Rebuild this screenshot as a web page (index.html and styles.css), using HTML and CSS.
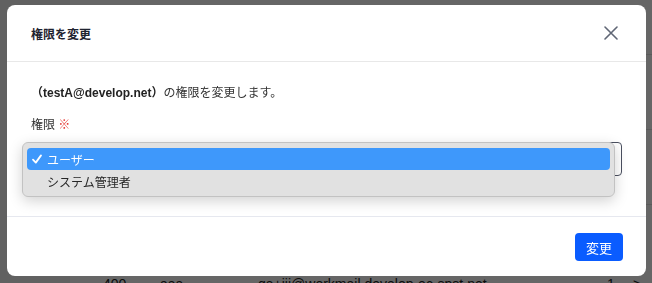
FILE: index.html
```html
<!DOCTYPE html>
<html lang="ja">
<head>
    <meta charset="UTF-8">
    <meta name="viewport" content="width=device-width, initial-scale=1.0">
    <title>権限を変更</title>
    <link rel="stylesheet" href="styles.css">
</head>
<body>
    <!-- Page behind the dialog -->
    <div class="page">
        <aside class="sidebar"></aside>
        <main class="main">
            <div class="topbar"></div>
            <div class="row"></div>
            <div class="row"></div>
            <div class="data-row">
                <span>400</span>
                <span>aaa</span>
                <span>qa+jjj@workmail.develop-ec-spst.net</span>
                <span>1</span>
                <span>&gt;</span>
            </div>
        </main>
    </div>

    <!-- Dialog -->
    <div class="overlay">
        <div class="modal">
            <div class="modal-header">
                <h2 class="modal-title">権限を変更</h2>
                <button class="close-btn" type="button" aria-label="閉じる">
                    <svg width="14" height="14" viewBox="0 0 14 14">
                        <path d="M1 1 L13 13 M13 1 L1 13" stroke="#5f6675" stroke-width="1.6" stroke-linecap="round" fill="none"/>
                    </svg>
                </button>
            </div>

            <div class="modal-body">
                <p class="message"><strong>（testA@develop.net）</strong>の権限を変更します。</p>
                <label class="field-label">権限 <span class="required">※</span></label>

                <div class="select-wrap">
                    <div class="select-box"></div>
                    <!-- Open option list -->
                    <ul class="select-menu">
                        <li class="option selected">
                            <span class="check">
                                <svg width="10" height="10" viewBox="0 0 10 10">
                                    <path d="M1 5.6 L3.8 8.6 L9 1.4" stroke="#ffffff" stroke-width="1.8" stroke-linecap="round" stroke-linejoin="round" fill="none"/>
                                </svg>
                            </span>ユーザー
                        </li>
                        <li class="option"><span class="check"></span>システム管理者</li>
                    </ul>
                </div>
            </div>

            <div class="modal-footer">
                <button class="submit-btn" type="button">変更</button>
            </div>
        </div>
    </div>
</body>
</html>
```

FILE: styles.css
```css
/* General Reset */
* {
    margin: 0;
    padding: 0;
    box-sizing: border-box;
}

body {
    background-color: #ffffff;
    color: #333333;
    font-family: "Liberation Sans", "Noto Sans CJK JP", sans-serif;
    font-size: 12px;
    overflow: hidden;
}

/* Background page */
.page {
    display: flex;
    height: 283px;
}

.sidebar {
    width: 70px;
    background-color: #f2f2f2;
}

.main {
    flex: 1;
}

.topbar {
    height: 55px;
    border-bottom: 1px solid #e0e0e0;
}

.row {
    height: 75px;
    border-bottom: 1px solid #e0e0e0;
}

.data-row {
    display: grid;
    grid-template-columns: 57px 98px 349px 26px auto;
    padding: 69px 0 0 33px;
    font-size: 14px;
    line-height: 20px;
    color: #222222;
}

/* Overlay */
.overlay {
    position: fixed;
    inset: 0;
    background-color: rgba(0, 0, 0, 0.6);
    padding: 5px 6px 0 7px;
}

/* Modal */
.modal {
    width: 639px;
    background-color: #ffffff;
    border-radius: 8px;
    display: flex;
    flex-direction: column;
}

.modal-header {
    height: 57px;
    padding: 0 23px 0 24px;
    border-bottom: 1px solid #e8e8e8;
    display: flex;
    justify-content: space-between;
    align-items: center;
}

.modal-title {
    font-size: 12px;
    font-weight: bold;
    color: #1f2330;
}

.close-btn {
    width: 24px;
    height: 24px;
    border: none;
    background: none;
    display: flex;
    align-items: center;
    justify-content: center;
    cursor: pointer;
}

.modal-body {
    padding: 22px 24px 40px;
}

.message {
    line-height: 18px;
    color: #333333;
}

.message strong {
    color: #222222;
}

.field-label {
    display: block;
    margin-top: 14px;
    line-height: 18px;
    color: #333333;
}

.required {
    color: #e53935;
}

/* Select */
.select-wrap {
    position: relative;
    margin-top: 8px;
}

.select-box {
    height: 34px;
    border: 1px solid #4b5060;
    border-radius: 4px;
}

.select-menu {
    position: absolute;
    top: 0;
    left: -9px;
    width: 593px;
    list-style: none;
    padding: 5px 4px 4px;
    background-color: #e1e1e1;
    border: 1px solid #c2c2c2;
    border-radius: 6px;
    box-shadow: 0 4px 14px rgba(0, 0, 0, 0.18);
}

.option {
    height: 22px;
    display: flex;
    align-items: center;
    border-radius: 4px;
    color: #262626;
}

.option.selected {
    background-color: #3e98fb;
    color: #ffffff;
}

.check {
    width: 20px;
    padding-left: 5px;
    display: flex;
    align-items: center;
}

/* Footer */
.modal-footer {
    padding: 16px 23px 15px;
    border-top: 1px solid #e6e8ef;
    display: flex;
    justify-content: flex-end;
}

.submit-btn {
    width: 48px;
    height: 28px;
    border: none;
    border-radius: 4px;
    background-color: #0a5cff;
    color: #ffffff;
    font-family: inherit;
    font-size: 13px;
    cursor: pointer;
}
```
